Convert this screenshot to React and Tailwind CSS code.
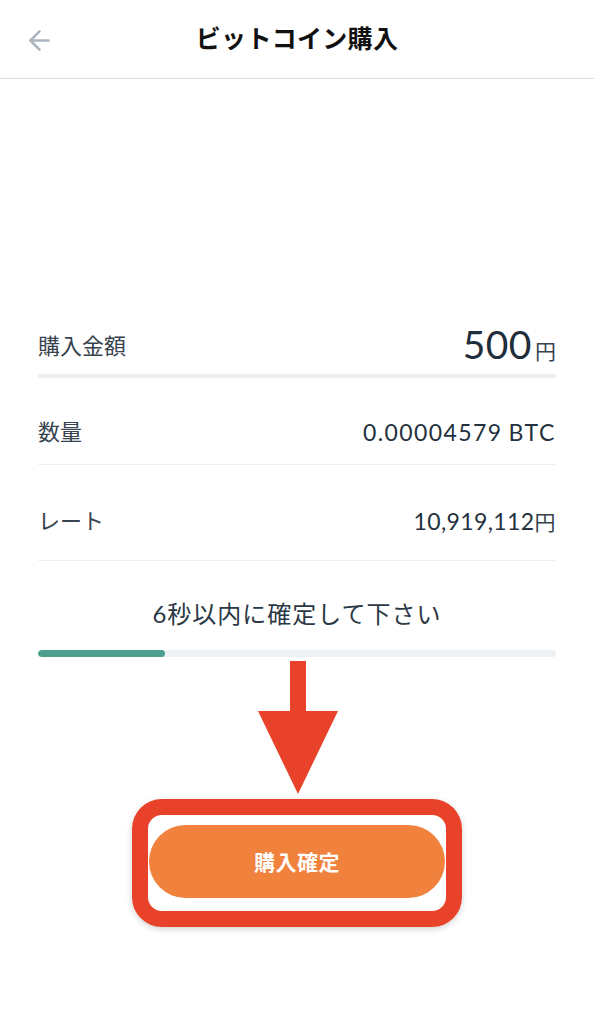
import { ArrowLeft } from "lucide-react";

const font = { fontFamily: 'Lato, "Noto Sans CJK JP", sans-serif' };

const App = () => {
  return (
    <div className="w-[594px] min-h-[1024px] bg-white text-[#243140]" style={font}>
      {/* header */}
      <div className="relative h-[79px] flex items-center justify-center border-b border-[#dddddd]">
        <ArrowLeft className="absolute left-[24px] top-[25px] text-[#aab5c0]" size={31} strokeWidth={2} />
        <h1 className="text-[25px] font-bold text-[#111111] tracking-[0.3px]">ビットコイン購入</h1>
      </div>

      <div className="px-[38px]">
        {/* amount */}
        <div className="mt-[246px] h-[50px] pb-[9px] flex items-center justify-between">
          <span className="text-[22px] text-[#36424e]">購入金額</span>
          <span className="flex items-baseline">
            <span className="text-[39px] leading-[40px] tracking-[0.5px] text-[#1f2d3b]">500</span>
            <span className="text-[21px] ml-[3px] text-[#36424e]">円</span>
          </span>
        </div>
        <div className="h-[4px] bg-[#eeeeee] mt-[-1px]" />

        {/* quantity */}
        <div className="pt-[40px] pb-[18px] flex items-center justify-between h-[86px]">
          <span className="text-[22px] leading-[28px] text-[#36424e]">数量</span>
          <span className="text-[23px] leading-[28px] tracking-[1.4px]">
            0.00004579<span className="ml-[6px] tracking-[1.6px]">BTC</span>
          </span>
        </div>
        <div className="h-px bg-[#eef0f2]" />

        {/* rate */}
        <div className="pt-[42px] pb-[25px] flex items-center justify-between h-[95px]">
          <span className="text-[22px] leading-[28px] text-[#36424e]">レート</span>
          <span className="text-[23px] leading-[28px] tracking-[0.4px]">
            10,919,112<span className="text-[21px] text-[#36424e]">円</span>
          </span>
        </div>
        <div className="h-px bg-[#eef0f2]" />

        <p className="mt-[39px] text-center text-[24px] leading-[28px] tracking-[1px] text-[#2b3845]">
          6秒以内に確定して下さい
        </p>

        {/* progress */}
        <div className="mt-[22px] h-[7px] rounded-full bg-[#eef2f5] overflow-hidden">
          <div className="h-full rounded-full bg-[#4d9e8f]" style={{ width: "24.5%" }} />
        </div>
      </div>

      {/* annotation arrow */}
      <div className="flex justify-center mt-[4px]">
        <svg width="80" height="133" viewBox="0 0 80 133" className="ml-[2px]">
          <rect x="32" y="0" width="16" height="52" fill="#e8432a" />
          <polygon points="0,50 80,50 40,133" fill="#e8432a" />
        </svg>
      </div>

      {/* button with annotation frame */}
      <div className="flex justify-center mt-[5px]">
        <div className="border-[16px] border-[#e8432a] rounded-[30px] pt-[10px] pb-[13px] px-px shadow-[0_2px_6px_rgba(0,0,0,0.18)]">
          <button
            type="button"
            className="w-[296px] h-[73px] rounded-full bg-[#f0823e] text-white text-[21px] font-bold tracking-[0.5px]"
          >
            購入確定
          </button>
        </div>
      </div>
    </div>
  );
};

export default App;
